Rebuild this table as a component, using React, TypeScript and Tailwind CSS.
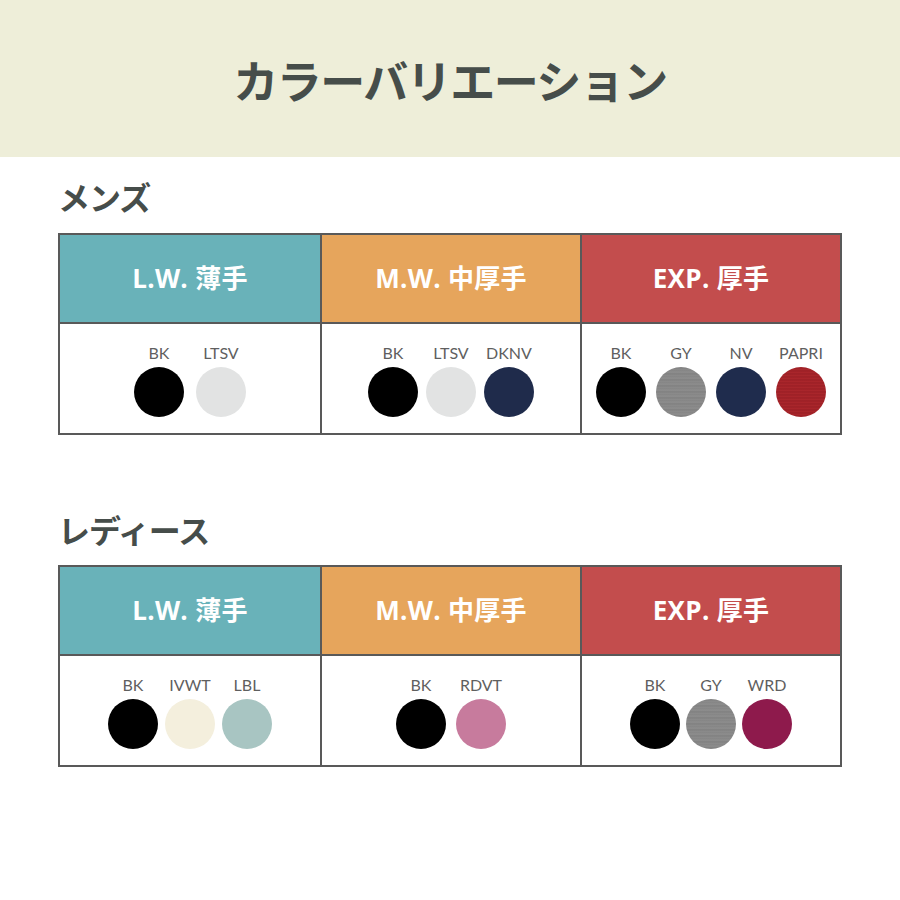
import React from 'react';

type Column = { title: string; head: string; swatches: string[]; gap: string };

const gray = 'bg-[repeating-linear-gradient(0deg,#8a8a8a_0px,#7f7f7f_1px,#909090_3px,#858585_4px,#8c8c8c_6px)]';
const papri = 'bg-[repeating-linear-gradient(0deg,#a8242a_0px,#9a1f25_1px,#ae282d_3px)]';

const swatchClass: Record<string, string> = {
    BK: 'bg-black',
    LTSV: 'bg-[#e2e3e3]',
    DKNV: 'bg-[#1f2b4b]',
    GY: gray,
    NV: 'bg-[#1f2c4d]',
    PAPRI: papri,
    IVWT: 'bg-[#f4efdd]',
    LBL: 'bg-[#a8c5c2]',
    RDVT: 'bg-[#c77b9d]',
    WRD: 'bg-[#8e1a4c]',
};

const mens: Column[] = [
    { title: 'L.W. 薄手', head: 'bg-[#69b2b9]', swatches: ['BK', 'LTSV'], gap: 'gap-[12px]' },
    { title: 'M.W. 中厚手', head: 'bg-[#e6a55c]', swatches: ['BK', 'LTSV', 'DKNV'], gap: 'gap-[8px]' },
    { title: 'EXP. 厚手', head: 'bg-[#c34d4d]', swatches: ['BK', 'GY', 'NV', 'PAPRI'], gap: 'gap-[10px]' },
];

const ladies: Column[] = [
    { title: 'L.W. 薄手', head: 'bg-[#69b2b9]', swatches: ['BK', 'IVWT', 'LBL'], gap: 'gap-[7px]' },
    { title: 'M.W. 中厚手', head: 'bg-[#e6a55c]', swatches: ['BK', 'RDVT'], gap: 'gap-[10px]' },
    { title: 'EXP. 厚手', head: 'bg-[#c34d4d]', swatches: ['BK', 'GY', 'WRD'], gap: 'gap-[6px]' },
];

const ColorTable: React.FC<{ cols: Column[] }> = ({ cols }) => (
    <div className="grid grid-cols-3 border-2 border-[#595959]">
        {cols.map((col, i) => (
            <div key={col.title} className={`flex flex-col ${i > 0 ? 'border-l-2 border-[#595959]' : ''}`}>
                <div className={`${col.head} h-[89px] border-b-2 border-[#595959] flex items-center justify-center text-white text-[26px] font-bold tracking-[0.3px] font-['Open_Sans','Noto_Sans_CJK_JP',sans-serif]`}>
                    {col.title}
                </div>
                <div className={`h-[109px] flex justify-center items-start ${col.gap} pt-[19px]`}>
                    {col.swatches.map((code) => (
                        <div key={code} className="flex flex-col items-center min-w-[50px]">
                            <span className="text-[16px] leading-[20px] text-[#5f5f5f] whitespace-nowrap font-['Lato',sans-serif]">{code}</span>
                            <div className={`mt-[4px] w-[50px] h-[50px] rounded-full ${swatchClass[code]}`} />
                        </div>
                    ))}
                </div>
            </div>
        ))}
    </div>
);

export default function App() {
    return (
        <div className="w-[900px] h-[900px] bg-white font-['Noto_Sans_CJK_JP',sans-serif]">
            <div className="h-[157px] bg-[#eeeed9] flex items-center justify-center">
                <h1 className="text-[45px] font-bold text-[#464d4a] tracking-[-1.5px] pt-[2px]">カラーバリエーション</h1>
            </div>

            <section className="px-[58px]">
                <h2 className="mt-[19px] mb-[17px] text-[32px] leading-[40px] font-bold text-[#464d4a] tracking-[-1px]">メンズ</h2>
                <ColorTable cols={mens} />

                <h2 className="mt-[74px] mb-[16px] text-[32px] leading-[40px] font-bold text-[#464d4a] tracking-[-1px]">レディース</h2>
                <ColorTable cols={ladies} />
            </section>
        </div>
    );
}
